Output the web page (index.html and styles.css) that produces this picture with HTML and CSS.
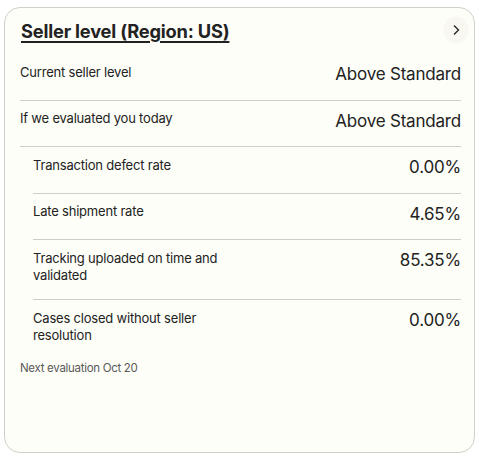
FILE: index.html
```html
<!DOCTYPE html>
<html>
<head>
<meta charset="utf-8">
<link rel="stylesheet" href="styles.css">
</head>
<body>
<div class="card">
  <div class="header">
    <h2 class="title">Seller level (Region: US)</h2>
    <span class="chev"><svg width="10" height="12" viewBox="0 0 10 12"><path d="M3 1.5 L7.5 6 L3 10.5" fill="none" stroke="#222" stroke-width="1.3"/></svg></span>
  </div>
  <div class="row">
    <div class="label">Current seller level</div>
    <div class="value">Above Standard</div>
  </div>
  <div class="row">
    <div class="label">If we evaluated you today</div>
    <div class="value">Above Standard</div>
  </div>
  <div class="sub">
    <div class="row">
      <div class="label">Transaction defect rate</div>
      <div class="value">0.00%</div>
    </div>
    <div class="row">
      <div class="label">Late shipment rate</div>
      <div class="value">4.65%</div>
    </div>
    <div class="row">
      <div class="label">Tracking uploaded on time and validated</div>
      <div class="value">85.35%</div>
    </div>
    <div class="row last">
      <div class="label">Cases closed without seller resolution</div>
      <div class="value">0.00%</div>
    </div>
  </div>
  <div class="next">Next evaluation Oct 20</div>
</div>
</body>
</html>
```
FILE: styles.css
```css
html, body {
  margin: 0;
  padding: 0;
  background: #ffffff;
}
body {
  font-family: Inter, "Liberation Sans", sans-serif;
  color: #222222;
  padding: 7px 5px 0 4px;
}
.card {
  box-sizing: border-box;
  width: 471px;
  height: 446px;
  background: #fefef8;
  border: 1px solid #d0d0c8;
  border-radius: 16px;
  padding: 0 13px 0 15px;
}
.header {
  display: flex;
  justify-content: space-between;
  align-items: center;
  padding-top: 8px;
  height: 30px;
  margin-bottom: 8px;
}
.title {
  margin: 0 0 0 1px;
  font-size: 18.3px;
  font-weight: 700;
  text-decoration: underline;
  text-underline-offset: 3px;
  text-decoration-thickness: 1.5px;
  letter-spacing: -0.2px;
}
.chev {
  width: 26px;
  height: 26px;
  border-radius: 50%;
  background: #f8f8f1;
  display: flex;
  align-items: center;
  justify-content: center;
  margin-right: -8px;
  margin-top: -3px;
}
.chev svg { display: block; }
.row {
  display: flex;
  justify-content: space-between;
  align-items: flex-start;
  padding: 9px 0 14.5px;
  border-bottom: 1px solid #cfcfc8;
}
.row.last { border-bottom: none; }
.label {
  font-size: 13px;
  line-height: 17.5px;
  padding-top: 0.5px;
  max-width: 200px;
  letter-spacing: -0.2px;
}
.value {
  font-size: 17px;
  line-height: 22px;
  letter-spacing: -0.2px;
}
.sub {
  padding-left: 13px;
}
.next {
  margin-top: 2px;
  font-size: 11.5px;
  color: #595959;
  letter-spacing: -0.3px;
}
```
